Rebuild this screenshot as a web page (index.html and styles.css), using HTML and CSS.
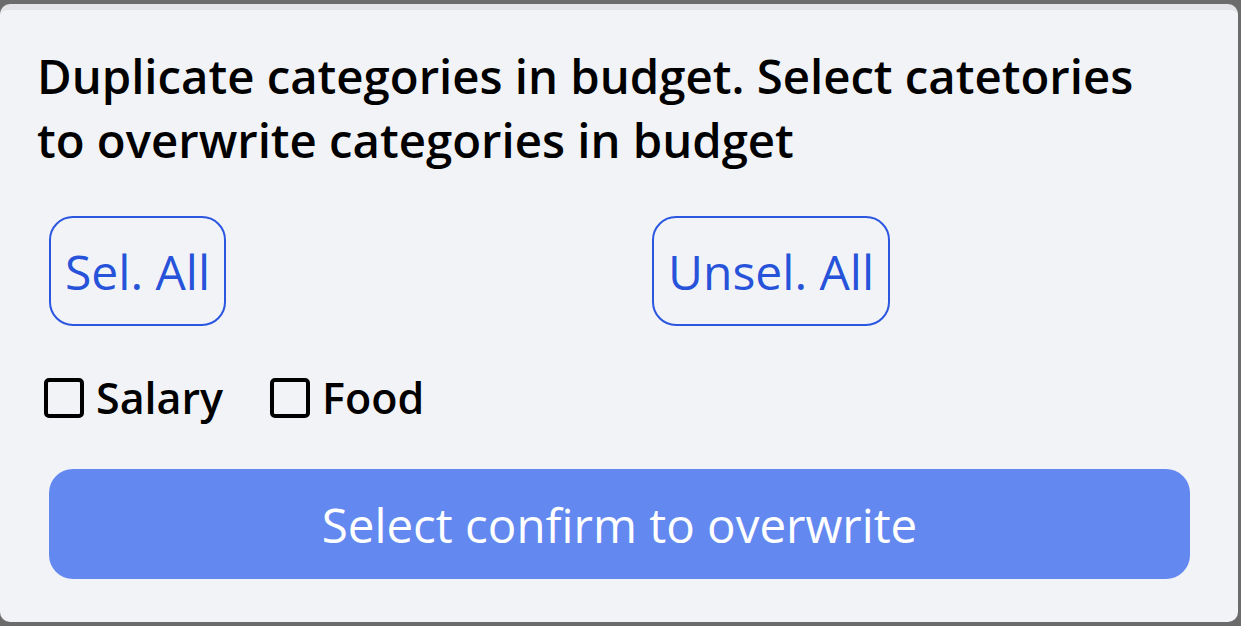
FILE: index.html
```html
<!DOCTYPE html>
<html lang="en">
<head>
    <meta charset="UTF-8">
    <meta name="viewport" content="width=device-width, initial-scale=1.0">
    <title>Duplicate categories</title>
    <link rel="stylesheet" href="styles.css">
</head>
<body>
    <div class="dialog">
        <p class="message">Duplicate categories in budget. Select catetories to overwrite categories in budget</p>

        <div class="select-row">
            <div class="select-cell">
                <button class="outline-button">Sel. All</button>
            </div>
            <div class="select-cell">
                <button class="outline-button">Unsel. All</button>
            </div>
        </div>

        <div class="category-list">
            <label class="category"><span class="check-box"></span>Salary</label>
            <label class="category"><span class="check-box"></span>Food</label>
        </div>

        <button class="confirm-button">Select confirm to overwrite</button>
    </div>
</body>
</html>
```

FILE: styles.css
```css
body {
    margin: 0;
    padding: 4px 0 0 0;
    background-color: #6b6b6b;
    font-family: "Open Sans", "Noto Sans", sans-serif;
    color: #000;
}
.dialog {
    box-sizing: border-box;
    width: 1238px;
    height: 618px;
    background-color: #f2f3f7;
    border-top: 6px solid #e4e4e6;
    border-radius: 10px;
    padding: 0 37px;
}
.message {
    max-width: 1110px;
    margin: 0;
    padding-top: 34px;
    font-size: 47.3px;
    font-weight: 600;
    line-height: 64px;
}
.select-row {
    display: grid;
    grid-template-columns: 603px 1fr;
    margin-top: 44px;
}
.select-cell {
    padding-left: 12px;
}
.outline-button {
    height: 110px;
    padding: 0 14px;
    background: transparent;
    border: 2px solid #2a56e0;
    border-radius: 24px;
    color: #2653d9;
    font-family: inherit;
    font-size: 48px;
}
.category-list {
    display: flex;
    gap: 47px;
    margin-top: 47px;
    padding-left: 7px;
}
.category {
    display: flex;
    align-items: center;
    gap: 12px;
    font-size: 43px;
    font-weight: 600;
    line-height: 50px;
}
.check-box {
    box-sizing: border-box;
    width: 40px;
    height: 40px;
    border: 4px solid #000;
    border-radius: 5px;
}
.confirm-button {
    display: block;
    width: 1141px;
    height: 110px;
    margin: 46px 0 0 12px;
    background-color: #6389f1;
    border: none;
    border-radius: 24px;
    color: #fff;
    font-family: inherit;
    font-size: 47.5px;
}
```
